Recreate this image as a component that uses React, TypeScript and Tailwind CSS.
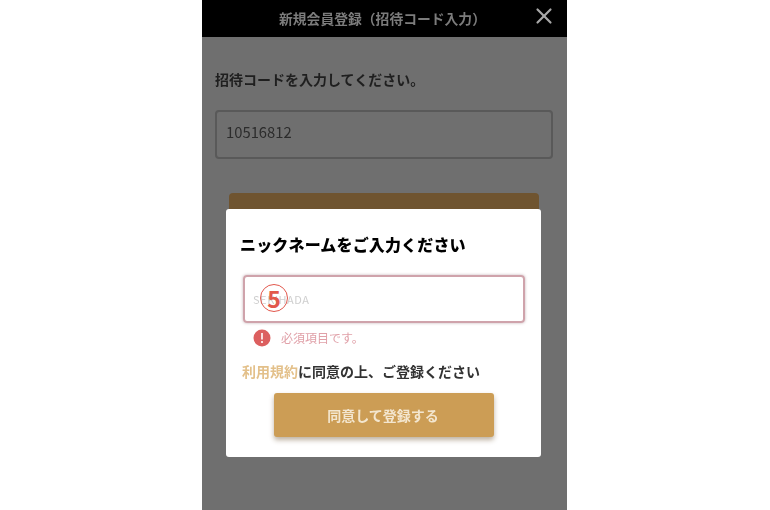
import { X } from 'lucide-react';

const FONT = "font-['Noto_Sans_CJK_JP','Noto_Sans',sans-serif]";

function AlertDot() {
  return (
    <svg width="18" height="18" viewBox="0 0 18 18" className="shrink-0">
      <circle cx="9" cy="9" r="8.5" fill="#dc5f5f" />
      <rect x="8" y="4" width="2" height="6.5" fill="#f8dede" />
      <rect x="8" y="12" width="2" height="2" fill="#f8dede" />
    </svg>
  );
}

export default function App() {
  return (
    <div className={`${FONT} w-[770px] h-[510px] bg-white overflow-hidden`}>
      <div className="relative ml-[202px] w-[365px] h-[510px] bg-[#6f6f6f] flex flex-col">
        {/* Header */}
        <div className="h-[37px] bg-black flex items-center justify-center shrink-0 relative">
          <span className="text-[13.8px] font-bold text-[#7c7c7c] blur-[0.7px] -translate-x-[2px]">新規会員登録（招待コード入力）</span>
          <X className="absolute right-[10px] top-[3px] w-[26px] h-[26px] text-[#a8a8a8]" strokeWidth={2} />
        </div>

        {/* Invite code behind the dialog */}
        <div className="pl-[13px] pr-[14px] flex flex-col">
          <p className="mt-[31px] text-[14px] leading-[22px] font-bold text-[#1f1f1f] blur-[0.7px]">招待コードを入力してください。</p>
          <div className="mt-[20px] h-[49px] border-2 border-[#595959] rounded-[4px] flex items-center px-[9px]">
            <span className="text-[14.8px] text-[#2c2c2c] blur-[0.6px] -translate-y-[2px]">10516812</span>
          </div>
          <div className="mt-[34px] ml-[14px] mr-[14px] h-[40px] bg-[#6f5430] rounded-[4px]" />
        </div>

        {/* Dialog */}
        <div className="absolute left-[24px] top-[209px] w-[315px] h-[248px] bg-white rounded-[3px] px-[14px] flex flex-col">
          <h2 className="mt-[23px] text-[16px] leading-[24px] tracking-[0.01em] font-black text-black blur-[0.4px]">ニックネームをご入力ください</h2>
          <div className="relative mt-[19px] ml-[3px] w-[282px] h-[48px] border-2 border-[#cfa3ab] rounded-[4px] flex items-center px-[8px] shadow-[0_0_3px_rgba(120,80,90,0.45)]">
            <span className="text-[11px] tracking-[0.05em] text-[#cfcfcf] blur-[0.7px]">SEKIHADA</span>
            <span className="absolute left-[15px] top-[7px] w-[28px] h-[28px] rounded-full border-[1.5px] border-[#e2574c] flex items-center justify-center text-[23px] leading-none font-bold text-[#e2574c]">5</span>
          </div>
          <div className="mt-[6px] ml-[13px] flex items-center gap-[10px]">
            <AlertDot />
            <span className="text-[12px] leading-[18px] text-[#e0a0a8] blur-[0.6px]">必須項目です。</span>
          </div>
          <p className="mt-[13px] ml-[2px] text-[14px] leading-[22px] font-bold text-[#333333] blur-[0.6px]">
            <span className="text-[#e3c08a]">利用規約</span>に同意の上、ご登録ください
          </p>
          <button className="mt-[11px] ml-[34px] w-[220px] h-[44px] bg-[#cc9d55] rounded-[3px] shadow-[0_3px_5px_rgba(90,60,20,0.4)] text-[14px] font-bold text-[#f3e6cf]">
            <span className="blur-[0.6px] inline-block -translate-x-[1px]">同意して登録する</span>
          </button>
        </div>
      </div>
    </div>
  );
}
